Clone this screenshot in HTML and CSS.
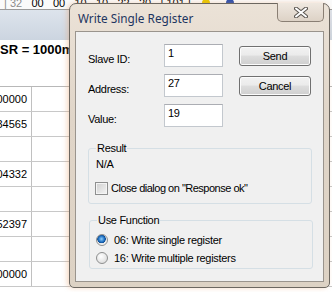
FILE: index.html
```html
<!DOCTYPE html>
<html lang="en">
<head>
    <meta charset="UTF-8">
    <title>Write Single Register</title>
    <link rel="stylesheet" href="styles.css">
</head>
<body>
    <div class="app">
        <div class="toolbar">
            <div class="tb-line">
                <span class="sep dim">|</span>
                <span class="num dim">32</span>
                <span class="num">00</span>
                <span class="num">00</span>
                <span class="num">10</span>
                <span class="num">10</span>
                <span class="num">22</span>
                <span class="num">20</span>
                <span class="sep">|</span>
                <span class="num">101</span>
                <span class="sep">|</span>
                <span class="tb-icon yellow"></span>
                <span class="tb-icon blue"></span>
            </div>
        </div>
        <div class="band"></div>
        <div class="formula">SR = 1000ms</div>
        <div class="grid">
            <div class="grid-row"><span class="c1">00000</span><span class="c2"></span></div>
            <div class="grid-row"><span class="c1">34565</span><span class="c2"></span></div>
            <div class="grid-row"><span class="c1"></span><span class="c2"></span></div>
            <div class="grid-row"><span class="c1">04332</span><span class="c2"></span></div>
            <div class="grid-row"><span class="c1"></span><span class="c2"></span></div>
            <div class="grid-row"><span class="c1">52397</span><span class="c2"></span></div>
            <div class="grid-row"><span class="c1"></span><span class="c2"></span></div>
            <div class="grid-row"><span class="c1">00000</span><span class="c2"></span></div>
        </div>
    </div>

    <div class="dialog">
        <div class="titlebar">
            <span class="title">Write Single Register</span>
            <button class="close-btn" type="button">
                <svg width="14" height="11" viewBox="0 0 14 11">
                    <path d="M2 1.5 L12 9.5 M12 1.5 L2 9.5" stroke="#5a5550" stroke-width="4" stroke-linecap="round"/>
                    <path d="M2 1.5 L12 9.5 M12 1.5 L2 9.5" stroke="#ffffff" stroke-width="2" stroke-linecap="round"/>
                </svg>
            </button>
        </div>
        <div class="client">
            <div class="top">
                <div class="fields">
                    <label class="field"><span class="lbl">Slave ID:</span><input type="text" value="1"></label>
                    <label class="field"><span class="lbl">Address:</span><input type="text" value="27"></label>
                    <label class="field"><span class="lbl">Value:</span><input type="text" value="19"></label>
                </div>
                <div class="buttons">
                    <button class="btn" type="button">Send</button>
                    <button class="btn" type="button">Cancel</button>
                </div>
            </div>

            <fieldset class="group result">
                <legend>Result</legend>
                <div class="na">N/A</div>
                <label class="check"><span class="box"></span>Close dialog on "Response ok"</label>
            </fieldset>

            <fieldset class="group func">
                <legend>Use Function</legend>
                <label class="radio"><span class="dot on"></span>06: Write single register</label>
                <label class="radio"><span class="dot"></span>16: Write multiple registers</label>
            </fieldset>
        </div>
    </div>
</body>
</html>
```

FILE: styles.css
```css
* {
    box-sizing: border-box;
}

body {
    margin: 0;
    width: 332px;
    height: 292px;
    overflow: hidden;
    background-color: #fff;
    font-family: "Liberation Sans", Arial, sans-serif;
    font-size: 11px;
    color: #000;
    position: relative;
}

/* background application */
.app {
    width: 332px;
}

.toolbar {
    height: 10px;
    overflow: hidden;
    border-bottom: 1px solid #9a9a9a;
    background-color: #fafafa;
}

.tb-line {
    display: flex;
    align-items: center;
    margin-top: -4px;
    padding-left: 4px;
    height: 14px;
    font-size: 11px;
    white-space: nowrap;
}

.sep {
    width: 6px;
}

.num {
    width: 21.5px;
}

.dim {
    color: #8c8c8c;
}

.tb-icon {
    width: 8px;
    height: 8px;
    border-radius: 50%;
    margin: 0 8px;
}

.yellow {
    background-color: #e8c800;
}

.blue {
    background-color: #2a4fb0;
}

.band {
    height: 30px;
    background: linear-gradient(#dde4ec, #ccd5e0);
}

.formula {
    height: 46px;
    padding-top: 2px;
    font-size: 13px;
    font-weight: bold;
    line-height: 16px;
}

.grid {
    border-top: 1px solid #b8b8b8;
}

.grid-row {
    display: flex;
    height: 25px;
    border-bottom: 1px solid #c8c8c8;
}

.c1 {
    display: flex;
    justify-content: flex-end;
    align-items: center;
    width: 32px;
    padding-right: 4px;
    border-right: 1px solid #c0c0c0;
    font-size: 11px;
    white-space: nowrap;
}

.c2 {
    width: 60px;
    border-right: 1px solid #c0c0c0;
}

/* dialog window over the app */
.dialog {
    position: absolute;
    left: 69px;
    top: 3px;
    width: 261px;
    height: 285px;
    display: flex;
    flex-direction: column;
    padding: 0 5px 5px 5px;
    border: 1px solid #6c6760;
    border-radius: 7px 7px 5px 5px;
    background: linear-gradient(#ebe2d7, #e0d5c8 40%, #ddd2c4);
    box-shadow: -2px 0 5px rgba(230, 150, 90, 0.35);
    letter-spacing: -0.3px;
}

.titlebar {
    display: flex;
    align-items: center;
    height: 27px;
}

.title {
    margin-left: 3px;
    font-family: "Noto Sans", "Open Sans", sans-serif;
    font-size: 11.8px;
    letter-spacing: 0;
    color: #1d3560;
}

.close-btn {
    margin-left: auto;
    align-self: flex-start;
    margin-top: -1px;
    width: 47px;
    height: 19px;
    padding: 0;
    display: flex;
    align-items: center;
    justify-content: center;
    border: 1px solid #8a7f74;
    border-top: none;
    border-radius: 0 0 5px 5px;
    background: linear-gradient(#efe8e0, #ddd2c6);
}

.client {
    flex: 1;
    border: 1px solid #9a948d;
    background-color: #f0f0f0;
    padding: 12px 11px 0 12px;
}

.top {
    display: flex;
}

.fields {
    display: flex;
    flex-direction: column;
    gap: 7px;
}

.field {
    display: flex;
    align-items: center;
    height: 23px;
}

.lbl {
    width: 76px;
    padding-top: 6px;
}

.field input {
    width: 59px;
    height: 23px;
    padding: 0 0 6px 3px;
    border: 1px solid #c3c8ce;
    border-top-color: #abadb3;
    background-color: #fff;
    font-family: inherit;
    font-size: 11px;
    letter-spacing: inherit;
    outline: none;
}

.buttons {
    display: flex;
    flex-direction: column;
    gap: 10px;
    margin-left: 16px;
    padding-top: 2px;
}

.btn {
    width: 72px;
    height: 20px;
    padding: 0;
    border: 1px solid #707070;
    border-radius: 3px;
    background: linear-gradient(#f2f2f2, #ebebeb 45%, #dddddd 50%, #cfcfcf);
    box-shadow: inset 0 0 0 1px #fcfcfc;
    font-family: inherit;
    font-size: 11px;
    letter-spacing: inherit;
    color: #000;
}

.group {
    margin: 15px 0 0 0;
    padding: 0 7px;
    border: 1px solid #d5dfe5;
    border-radius: 3px;
}

.group legend {
    padding: 0 1px;
    font-size: 11px;
    line-height: 13px;
}

.result {
    height: 62px;
}

.na {
    margin-top: 3px;
    line-height: 13px;
}

.check {
    display: flex;
    align-items: center;
    gap: 3px;
    margin-top: 11px;
    line-height: 13px;
    margin-left: -1px;
    letter-spacing: -0.5px;
}

.box {
    width: 13px;
    height: 13px;
    border: 1px solid #8e8f8f;
    background: linear-gradient(135deg, #cfcfcf, #f4f4f4);
    box-shadow: inset 0 0 0 1px #f4f4f4;
}

.func {
    height: 55px;
    margin-top: 10px;
    margin-left: 1px;
    margin-right: -1px;
}

.radio {
    display: flex;
    align-items: center;
    gap: 6px;
    height: 18px;
    margin-left: -1px;
}

.radio:first-of-type {
    margin-top: 4px;
}

.dot {
    width: 12px;
    height: 12px;
    border-radius: 50%;
    border: 1px solid #8e8f8f;
    background: radial-gradient(circle at 40% 35%, #ffffff, #d4d4d4);
}

.dot.on {
    background: radial-gradient(circle at 45% 40%, #8fd0ff 0, #1f6fc0 3px, #0c4c95 4px, #e8e8e8 4.5px, #ffffff);
}
```
